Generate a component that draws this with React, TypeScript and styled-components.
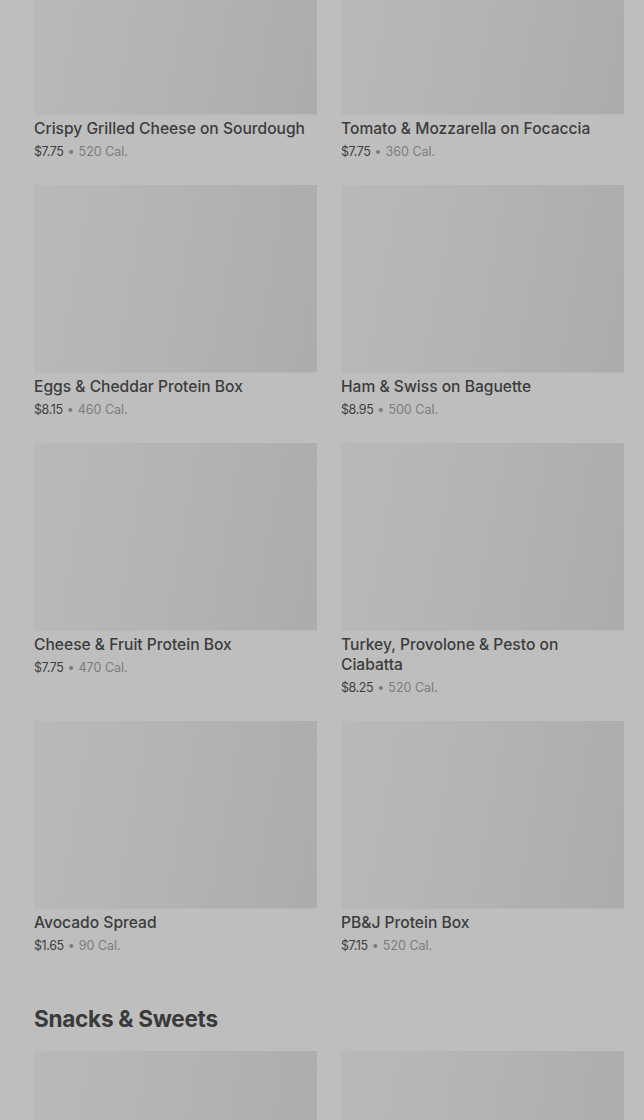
import React from 'react'
import styled, { createGlobalStyle } from 'styled-components'

const GlobalStyle = createGlobalStyle`
  html, body {
    margin: 0;
    padding: 0;
    background: #bebebe;
    overflow: hidden;
  }
  body {
    font-family: Inter, Roboto, "Liberation Sans", Arial, sans-serif;
    -webkit-font-smoothing: antialiased;
  }
`

type Item = { name: string; price: string; cal: string }

const sandwiches: Item[] = [
  { name: 'Crispy Grilled Cheese on Sourdough', price: '$7.75', cal: '520 Cal.' },
  { name: 'Tomato & Mozzarella on Focaccia', price: '$7.75', cal: '360 Cal.' },
  { name: 'Eggs & Cheddar Protein Box', price: '$8.15', cal: '460 Cal.' },
  { name: 'Ham & Swiss on Baguette', price: '$8.95', cal: '500 Cal.' },
  { name: 'Cheese & Fruit Protein Box', price: '$7.75', cal: '470 Cal.' },
  { name: 'Turkey, Provolone & Pesto on Ciabatta', price: '$8.25', cal: '520 Cal.' },
  { name: 'Avocado Spread', price: '$1.65', cal: '90 Cal.' },
  { name: 'PB&J Protein Box', price: '$7.15', cal: '520 Cal.' },
]

const snacks: Item[] = [
  { name: '', price: '', cal: '' },
  { name: '', price: '', cal: '' },
]

const Page = styled.div`
  padding: 0 20px 0 34px;
  margin-top: -73px;
`

const Grid = styled.div`
  display: grid;
  grid-template-columns: 283px 283px;
  column-gap: 24px;
  row-gap: 23px;
  align-items: start;
`

const Card = styled.div`
  display: flex;
  flex-direction: column;
`

const Thumb = styled.div`
  height: 188px;
  background: linear-gradient(100deg, #b9b9b9 0%, #b4b4b4 45%, #acacac 100%);
  box-shadow: inset 0 -1px 0 #b8b8b8;
`

const Title = styled.div`
  margin-top: 4px;
  padding-right: 8px;
  font-size: 15.6px;
  line-height: 20px;
  font-weight: 500;
  color: #3c3c3c;
`

const Meta = styled.div`
  margin-top: 3px;
  font-size: 12.5px;
  line-height: 20px;
  color: #7c7c7c;
`

const Price = styled.span`
  color: #404040;
  letter-spacing: -0.4px;
`

const Dot = styled.span`
  margin: 0 4px;
`

const SectionTitle = styled.h2`
  margin: 0;
  padding: 51px 0 20px;
  font-size: 22.6px;
  line-height: 24px;
  font-weight: 700;
  color: #3a3a3a;
  letter-spacing: -0.3px;
`

const MenuCard = ({ item }: { item: Item }) => (
  <Card>
    <Thumb />
    {item.name && <Title>{item.name}</Title>}
    {item.price && (
      <Meta>
        <Price>{item.price}</Price>
        <Dot>•</Dot>
        {item.cal}
      </Meta>
    )}
  </Card>
)

const App = () => (
  <>
    <GlobalStyle />
    <Page>
      <Grid>
        {sandwiches.map((it) => (
          <MenuCard key={it.name} item={it} />
        ))}
      </Grid>
      <SectionTitle>Snacks &amp; Sweets</SectionTitle>
      <Grid>
        {snacks.map((it, i) => (
          <MenuCard key={i} item={it} />
        ))}
      </Grid>
    </Page>
  </>
)

export default App
